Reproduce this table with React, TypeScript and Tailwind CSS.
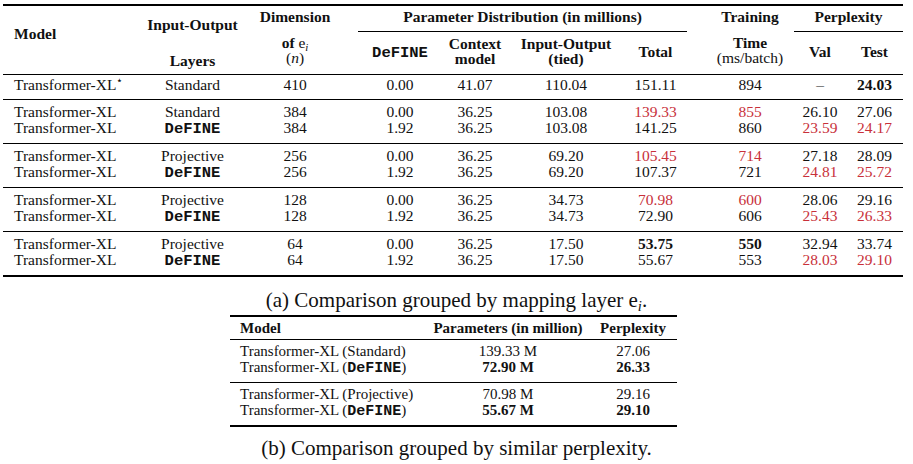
import React from 'react'

type Val = string | { v: string; red?: boolean; bold?: boolean }

const cols = 'grid grid-cols-[132px_115px_90px_18px_84px_66px_116px_63px_19px_88px_52px_57px]'

const DeFINE = ({ size = 'text-[15.5px]' }: { size?: string }) => (
    <span className={`font-[family-name:'Liberation_Mono',monospace] font-bold ${size}`}>DeFINE</span>
)

const r = (v: string): Val => ({ v, red: true })
const b = (v: string): Val => ({ v, bold: true })

const groups: { layer: string; cells: Val[] }[][] = [
    [
        { layer: 'Standard', cells: ['384', '0.00', '36.25', '103.08', r('139.33'), r('855'), '26.10', '27.06'] },
        { layer: 'DeFINE', cells: ['384', '1.92', '36.25', '103.08', '141.25', '860', r('23.59'), r('24.17')] },
    ],
    [
        { layer: 'Projective', cells: ['256', '0.00', '36.25', '69.20', r('105.45'), r('714'), '27.18', '28.09'] },
        { layer: 'DeFINE', cells: ['256', '1.92', '36.25', '69.20', '107.37', '721', r('24.81'), r('25.72')] },
    ],
    [
        { layer: 'Projective', cells: ['128', '0.00', '36.25', '34.73', r('70.98'), r('600'), '28.06', '29.16'] },
        { layer: 'DeFINE', cells: ['128', '1.92', '36.25', '34.73', '72.90', '606', r('25.43'), r('26.33')] },
    ],
    [
        { layer: 'Projective', cells: ['64', '0.00', '36.25', '17.50', b('53.75'), b('550'), '32.94', '33.74'] },
        { layer: 'DeFINE', cells: ['64', '1.92', '36.25', '17.50', '55.67', '553', r('28.03'), r('29.10')] },
    ],
]

const Num = ({ val }: { val: Val }) => {
    if (typeof val === 'string') return <div className="text-center">{val}</div>
    return (
        <div className={`text-center ${val.red ? 'text-[#c8303a]' : ''} ${val.bold ? 'font-bold' : ''}`}>{val.v}</div>
    )
}

const Row = ({ model, layer, cells }: { model: React.ReactNode; layer: string; cells: Val[] }) => {
    const [dim, def, ctx, io, total, time, val, test] = cells
    return (
        <div className={`${cols} leading-[16px]`}>
            <div className="pl-[11px]">{model}</div>
            <div className="text-center">{layer === 'DeFINE' ? <DeFINE /> : layer}</div>
            <Num val={dim} />
            <div />
            <Num val={def} />
            <Num val={ctx} />
            <Num val={io} />
            <Num val={total} />
            <div />
            <Num val={time} />
            <Num val={val} />
            <Num val={test} />
        </div>
    )
}

// upright e with an italic subscript i, like \mathbf{e}_i
const Ei = () => (
    <span>
        e<span className="italic text-[0.7em] relative top-[0.25em] leading-none font-normal">i</span>
    </span>
)

const MainTable = () => (
    <div className="ml-[3px] mt-[4px] w-[900px] text-[15.5px]">
        <div className={`${cols} grid-rows-[25px_1px_42px] border-t-2 border-b border-black font-bold`}>
            <div className="col-start-1 row-start-1 row-span-3 pl-[11px] pt-[20px] leading-[16px]">Model</div>
            <div className="col-start-2 row-start-1 row-span-3 pt-[11px] text-center leading-[16px]">
                <div>Input-Output</div>
                <div className="mt-[20px]">Layers</div>
            </div>
            <div className="col-start-3 row-start-1 row-span-3 pt-[3px] text-center">
                <div className="leading-[16px]">Dimension</div>
                <div className="mt-[10px] leading-[15px]">
                    of <span className="font-normal"><Ei /></span>
                </div>
                <div className="leading-[15px] font-normal">
                    (<span className="italic">n</span>)
                </div>
            </div>
            <div className="col-start-5 col-span-4 row-start-1 pt-[3px] text-center leading-[16px]">
                Parameter Distribution (in millions)
            </div>
            <div className="col-start-5 col-span-4 row-start-2 bg-black" />
            <div className="col-start-5 row-start-3 pt-[12px] text-center leading-[16px]"><DeFINE /></div>
            <div className="col-start-6 row-start-3 pt-[4px] text-center leading-[15px]">
                <div>Context</div>
                <div>model</div>
            </div>
            <div className="col-start-7 row-start-3 pt-[4px] text-center leading-[15px]">
                <div>Input-Output</div>
                <div>(tied)</div>
            </div>
            <div className="col-start-8 row-start-3 pt-[12px] text-center leading-[16px]">Total</div>
            <div className="col-start-10 row-start-1 row-span-3 pt-[3px] text-center">
                <div className="leading-[16px]">Training</div>
                <div className="mt-[10px] leading-[15px]">Time</div>
                <div className="leading-[15px] font-normal">(ms/batch)</div>
            </div>
            <div className="col-start-11 col-span-2 row-start-1 pt-[3px] text-center leading-[16px]">Perplexity</div>
            <div className="col-start-11 col-span-2 row-start-2 bg-black" />
            <div className="col-start-11 row-start-3 pt-[12px] text-center leading-[16px]">Val</div>
            <div className="col-start-12 row-start-3 pt-[12px] text-center leading-[16px]">Test</div>
        </div>

        <div className="pt-[2px] pb-[6px]">
            <Row
                model={<>Transformer-XL<span className="text-[11px] relative top-[-0.55em] leading-none">⋆</span></>}
                layer="Standard"
                cells={['410', '0.00', '41.07', '110.04', '151.11', '894', '–', b('24.03')]}
            />
        </div>

        {groups.map((g, i) => (
            <div
                key={i}
                className={`border-t border-black pt-[4px] pb-[6px] ${i === groups.length - 1 ? 'border-b-2' : ''}`}
            >
                {g.map((row, j) => (
                    <Row key={j} model="Transformer-XL" layer={row.layer} cells={row.cells} />
                ))}
            </div>
        ))}
    </div>
)

const small = 'grid grid-cols-[203px_150px_94px]'

const SmallTable = () => (
    <div className="ml-[230px] mt-[3px] w-[447px] text-[15px]">
        <div className={`${small} border-t-2 border-b border-black font-bold pt-[3px] h-[25px] leading-[16px]`}>
            <div className="pl-[10px]">Model</div>
            <div className="text-center">Parameters (in million)</div>
            <div className="text-center pl-[6px]">Perplexity</div>
        </div>
        {[
            [['Standard', '139.33 M', '27.06'], ['DeFINE', '72.90 M', '26.33']],
            [['Projective', '70.98 M', '29.16'], ['DeFINE', '55.67 M', '29.10']],
        ].map((g, i) => (
            <div key={i} className={`pt-[3px] pb-[5px] border-black ${i === 0 ? '' : 'border-t border-b-2'}`}>
                {g.map(([kind, params, ppl], j) => {
                    const def = kind === 'DeFINE'
                    return (
                        <div key={j} className={`${small} leading-[16px]`}>
                            <div className="pl-[10px]">
                                Transformer-XL ({def ? <DeFINE size="text-[15px]" /> : kind})
                            </div>
                            <div className={`text-center ${def ? 'font-bold' : ''}`}>{params}</div>
                            <div className={`text-center pl-[6px] ${def ? 'font-bold' : ''}`}>{ppl}</div>
                        </div>
                    )
                })}
            </div>
        ))}
    </div>
)

export default function App() {
    return (
        <div className="w-[913px] h-[464px] bg-white text-[#111] font-[family-name:'Liberation_Serif',serif] overflow-hidden">
            <MainTable />
            <div className="mt-[11px] text-center text-[21px] leading-[24px]">
                (a) Comparison grouped by mapping layer <Ei />.
            </div>
            <SmallTable />
            <div className="mt-[9px] text-center text-[21px] leading-[24px]">
                (b) Comparison grouped by similar perplexity.
            </div>
        </div>
    )
}
